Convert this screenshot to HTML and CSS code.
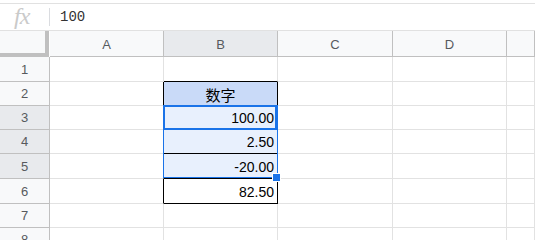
FILE: index.html
```html
<!DOCTYPE html>
<html lang="en">
<head>
    <meta charset="UTF-8">
    <title>Sheet</title>
    <link rel="stylesheet" href="styles.css">
</head>
<body>
    <div class="formula-bar">
        <span class="fx">fx</span>
        <span class="divider"></span>
        <span class="formula">100</span>
    </div>

    <div class="sheet">
        <div class="corner"></div>
        <div class="ch">A</div>
        <div class="ch active">B</div>
        <div class="ch">C</div>
        <div class="ch">D</div>
        <div class="ch"></div>

        <div class="rh">1</div>
        <div class="cell"></div>
        <div class="cell tt"></div>
        <div class="cell"></div>
        <div class="cell"></div>
        <div class="cell"></div>

        <div class="rh">2</div>
        <div class="cell tl"></div>
        <div class="cell tb head">数字</div>
        <div class="cell"></div>
        <div class="cell"></div>
        <div class="cell"></div>

        <div class="rh active">3</div>
        <div class="cell tl"></div>
        <div class="cell tb num picked">100.00</div>
        <div class="cell"></div>
        <div class="cell"></div>
        <div class="cell"></div>

        <div class="rh active">4</div>
        <div class="cell tl"></div>
        <div class="cell tb num picked">2.50</div>
        <div class="cell"></div>
        <div class="cell"></div>
        <div class="cell"></div>

        <div class="rh active">5</div>
        <div class="cell tl"></div>
        <div class="cell tb num picked">-20.00</div>
        <div class="cell"></div>
        <div class="cell"></div>
        <div class="cell"></div>

        <div class="rh">6</div>
        <div class="cell tl"></div>
        <div class="cell tb num">82.50</div>
        <div class="cell"></div>
        <div class="cell"></div>
        <div class="cell"></div>

        <div class="rh">7</div>
        <div class="cell"></div>
        <div class="cell"></div>
        <div class="cell"></div>
        <div class="cell"></div>
        <div class="cell"></div>

        <div class="rh">8</div>
        <div class="cell"></div>
        <div class="cell"></div>
        <div class="cell"></div>
        <div class="cell"></div>
        <div class="cell"></div>

        <!-- selection B3:B5 -->
        <div class="selection"></div>
        <div class="active-cell"></div>
        <div class="fill-handle"></div>
    </div>
</body>
</html>
```

FILE: styles.css
```css
* {
    box-sizing: border-box;
}
body {
    margin: 0;
    width: 535px;
    height: 240px;
    overflow: hidden;
    background: #fff;
    font-family: "Liberation Sans", Arial, sans-serif;
}
.formula-bar {
    margin-top: 3px;
    height: 28px;
    border-top: 1px solid #e1e1e1;
    border-bottom: 1px solid #e1e1e1;
    display: flex;
    align-items: center;
}
.fx {
    width: 49px;
    padding-left: 14px;
    font-family: "Liberation Serif", serif;
    font-style: italic;
    font-size: 24px;
    color: #cacaca;
    letter-spacing: -1px;
    line-height: 1;
    margin-top: -2px;
}
.divider {
    width: 1px;
    height: 18px;
    background: #dadce0;
}
.formula {
    padding-left: 10px;
    font-family: "Liberation Mono", monospace;
    font-size: 14px;
    color: #333;
}
.sheet {
    position: relative;
    display: grid;
    grid-template-columns: 50px 114px 114px 115px 114px 1fr;
    grid-template-rows: 26px 25px 24px 24px 24px 25px 25px 24px 24px;
}
.corner {
    margin-right: 1px;
    background: #f8f9fa;
    border-right: 4px solid #c0c0c0;
    border-bottom: 4px solid #c0c0c0;
}
.ch {
    background: #f8f9fa;
    border-right: 1px solid #c0c0c0;
    border-bottom: 1px solid #c0c0c0;
    display: flex;
    align-items: center;
    justify-content: center;
    font-size: 13px;
    color: #575a5e;
    padding-top: 1px;
}
.rh {
    background: #f8f9fa;
    border-right: 1px solid #c0c0c0;
    border-bottom: 1px solid #c0c0c0;
    display: flex;
    align-items: center;
    justify-content: center;
    font-size: 13px;
    color: #575a5e;
}
.ch.active, .rh.active {
    background: #e8eaed;
}
.cell {
    border-right: 1px solid #e2e2e2;
    border-bottom: 1px solid #e2e2e2;
    font-size: 14px;
    color: #000;
    display: flex;
    align-items: center;
    padding: 1px 3px 0;
}
.tt {
    border-bottom-color: #000;
}
.tl {
    border-right-color: #000;
}
.tb {
    border-right-color: #000;
    border-bottom-color: #000;
}
.head {
    background: #c9daf8;
    justify-content: center;
    font-family: "Liberation Sans", "Noto Sans CJK SC", sans-serif;
    font-size: 15px;
}
.num {
    justify-content: flex-end;
}
.picked {
    background: #e8f0fd;
}
.selection {
    position: absolute;
    left: 163px;
    top: 74px;
    width: 115px;
    height: 73px;
    border: 1px solid #1a73e8;
}
.active-cell {
    position: absolute;
    left: 163px;
    top: 74px;
    width: 114px;
    height: 25px;
    border: 2px solid #1a73e8;
}
.fill-handle {
    position: absolute;
    left: 272px;
    top: 142px;
    width: 9px;
    height: 9px;
    background: #1a73e8;
    border: 1px solid #fff;
}
```
